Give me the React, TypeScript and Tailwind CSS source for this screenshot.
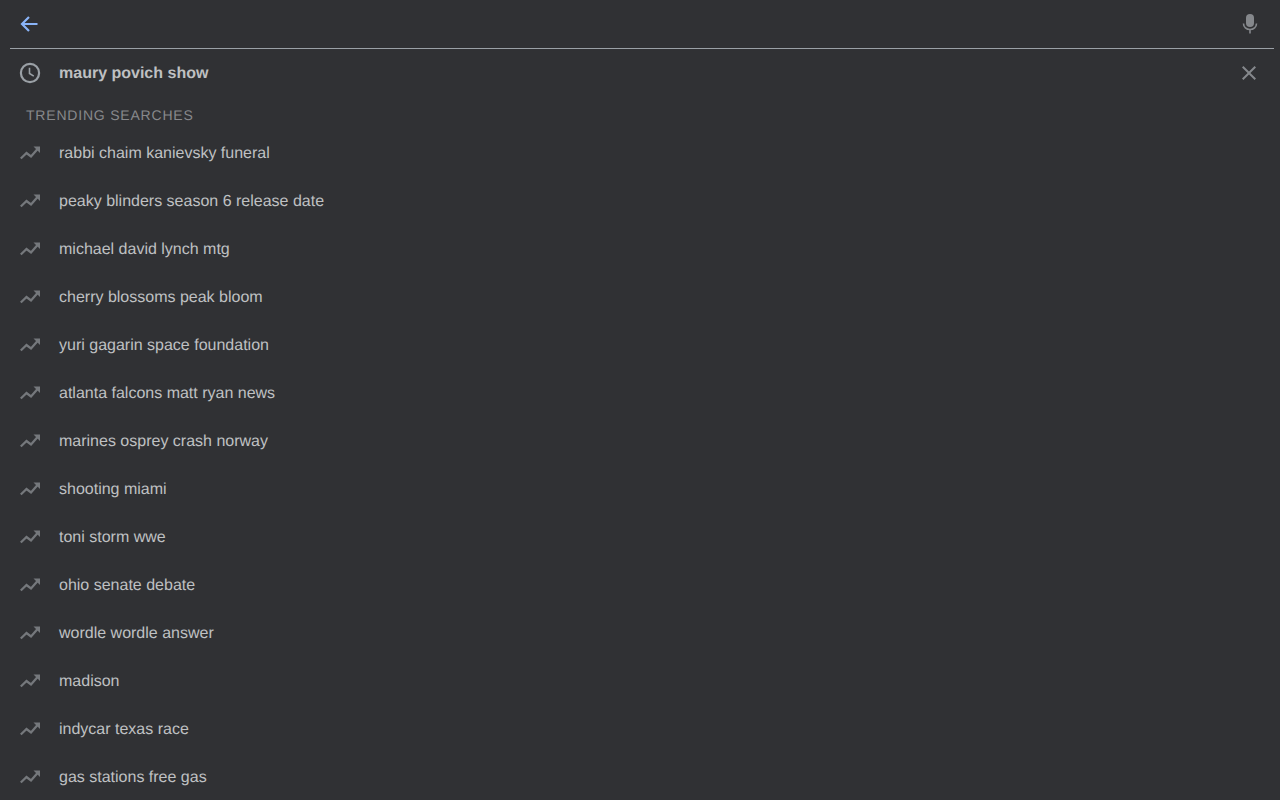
const items = ["rabbi chaim kanievsky funeral","peaky blinders season 6 release date","michael david lynch mtg","cherry blossoms peak bloom","yuri gagarin space foundation","atlanta falcons matt ryan news","marines osprey crash norway","shooting miami","toni storm wwe","ohio senate debate","wordle wordle answer","madison","indycar texas race","gas stations free gas"];

function Trend() {
  return (
    <svg width="24" height="24" viewBox="0 0 24 24" fill="none" stroke="#75787c" strokeWidth="2.3" className="shrink-0">
      <path d="M2.800 17.500l5.700-5.500 4.500 3.500 7-8" />
      <path d="M15.500 5.500H22V12z" fill="#75787c" stroke="none" />
    </svg>
  );
}

export default function App() {
  return (
    <div className="h-[800px] w-[1280px] overflow-hidden bg-[#303134] font-['Liberation_Sans',Arial,sans-serif] text-base text-[#bfc0c2] [text-rendering:geometricPrecision]">
      <div className="ml-2.5 mr-1.5 flex h-[49px] items-center justify-between border-b border-[#9aa0a6] pl-[7px] pr-[12px]">
        <svg width="24" height="24" viewBox="0 0 24 24" fill="none" stroke="#8ab4f8" strokeWidth="2.200">
          <path d="M20.500 12H5M12 5l-7 7 7 7" />
        </svg>
        <svg width="24" height="24" viewBox="0 0 24 24" fill="none" stroke="#85888c" strokeWidth="1.600">
          <rect x="8" y="2" width="8" height="13" rx="4" fill="#85888c" stroke="none" />
          <path d="M5.500 11.500c0 3.600 2.900 6 6.500 6s6.500-2.400 6.500-6M12 17.500V21.500" />
        </svg>
      </div>
      <div className="flex h-12 items-center pl-[18px] pr-[19px]">
        <svg width="24" height="24" viewBox="0 0 24 24" fill="none" stroke="#9aa0a6" strokeWidth="2.200" className="shrink-0">
          <circle cx="12" cy="12" r="9.100" />
          <path d="M11.500 6.800v5.700l4.300 2.600" strokeWidth="1.600" />
        </svg>
        <span className="ml-[17px] pt-0.5 font-bold">maury povich show</span>
        <svg width="24" height="24" viewBox="0 0 24 24" fill="#85888c" className="ml-auto">
          <path d="M19 6.410L17.590 5 12 10.590 6.410 5 5 6.410 10.590 12 5 17.590 6.410 19 12 13.410 17.590 19 19 17.590 13.410 12z" />
        </svg>
      </div>
      <div className="flex h-8 items-center pl-[26px] pt-1 text-sm tracking-[0.8px] text-[#88898c]">TRENDING SEARCHES</div>
      {items.map((t) => (
        <div key={t} className="flex h-12 items-center pl-[18px]">
          <Trend />
          <span className="ml-[17px] pt-0.5">{t}</span>
        </div>
      ))}
    </div>
  );
}
